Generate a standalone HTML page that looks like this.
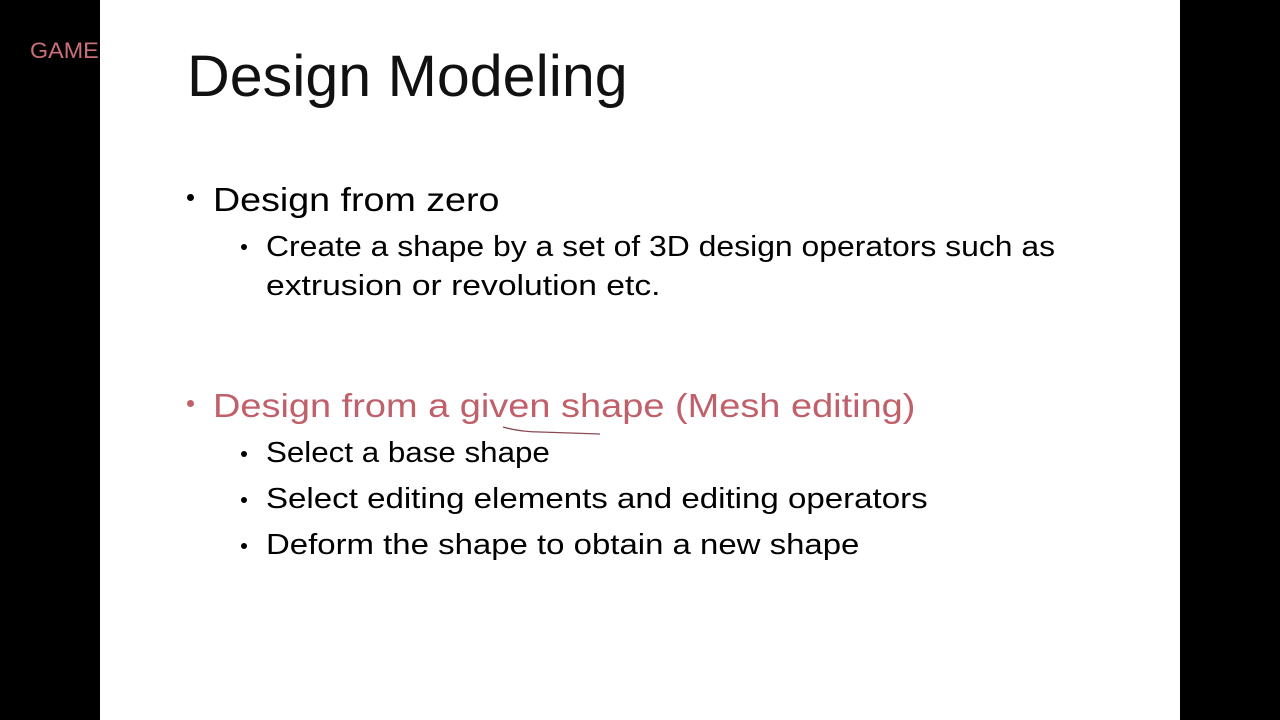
<!DOCTYPE html>
<html><head><style>
body{margin:0;width:1280px;height:720px;background:#000;position:relative;overflow:hidden;font-family:"Liberation Sans",sans-serif}
.slide{position:absolute;left:100px;top:0;width:1080px;height:720px;background:#fff}
.t{position:absolute;white-space:nowrap;line-height:1;color:#000;transform-origin:0 0}
.s{font-size:29px}
.dot{position:absolute;border-radius:50%;background:#000}
</style></head><body>
<div class="t" style="left:30px;top:40px;font-size:22px;color:#c9707a;transform:scaleX(1.06)">GAME</div>
<div class="slide"></div>
<div class="t" style="left:187px;top:48px;font-size:58px;color:#111;transform:scaleX(1.02)">Design Modeling</div>

<div class="dot" style="left:187px;top:194px;width:7px;height:7px"></div>
<div class="t" style="left:213px;top:183px;font-size:33px;transform:scaleX(1.14)">Design from zero</div>
<div class="dot" style="left:241px;top:244px;width:6px;height:6px"></div>
<div class="t s" style="left:266px;top:233px;transform:scaleX(1.10)">Create a shape by a set of 3D design operators such as</div>
<div class="t s" style="left:266px;top:272px;transform:scaleX(1.16)">extrusion or revolution etc.</div>

<div class="dot" style="left:187px;top:400px;width:7px;height:7px;background:#c0606a"></div>
<div class="t" style="left:213px;top:389px;font-size:33px;color:#c0606a;transform:scaleX(1.15)">Design from a given shape (Mesh editing)</div>
<svg style="position:absolute;left:0;top:0" width="1280" height="720"><path d="M503 427 Q520 432 540 432 L600 434" stroke="#8a4a55" stroke-width="1.3" fill="none"/></svg>
<div class="dot" style="left:241px;top:451px;width:6px;height:6px"></div>
<div class="t s" style="left:266px;top:439px;transform:scaleX(1.08)">Select a base shape</div>
<div class="dot" style="left:241px;top:497px;width:6px;height:6px"></div>
<div class="t s" style="left:266px;top:485px;transform:scaleX(1.14)">Select editing elements and editing operators</div>
<div class="dot" style="left:241px;top:543px;width:6px;height:6px"></div>
<div class="t s" style="left:266px;top:531px;transform:scaleX(1.136)">Deform the shape to obtain a new shape</div>
</body></html>
